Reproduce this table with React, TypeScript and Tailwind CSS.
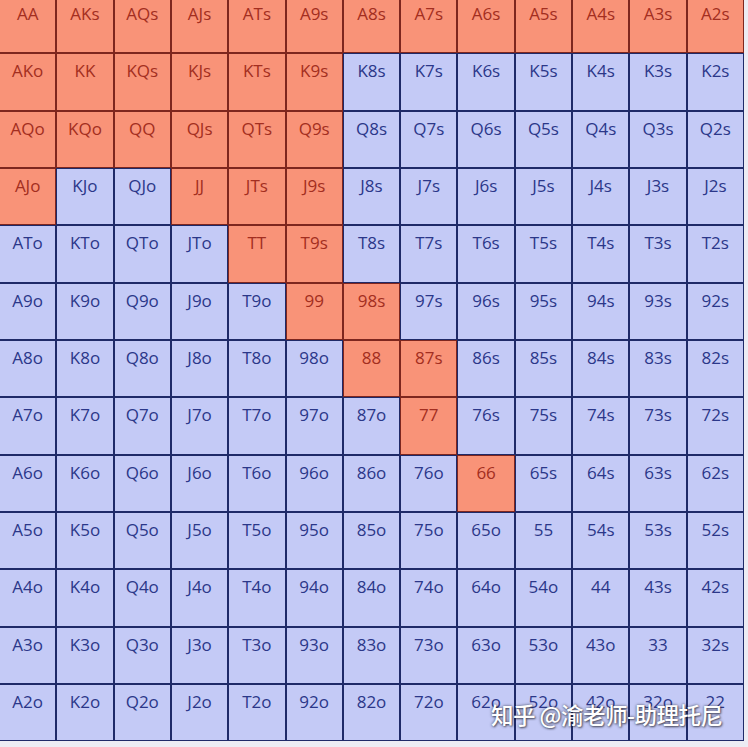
const ranks = ['A', 'K', 'Q', 'J', 'T', '9', '8', '7', '6', '5', '4', '3', '2'];

// cells played in the opening range (row, col)
const raised = new Set<string>([
  ...ranks.map((_, c) => `0-${c}`),
  '1-0', '1-1', '1-2', '1-3', '1-4', '1-5',
  '2-0', '2-1', '2-2', '2-3', '2-4', '2-5',
  '3-0', '3-3', '3-4', '3-5',
  '4-4', '4-5',
  '5-5', '5-6',
  '6-6', '6-7',
  '7-7',
  '8-8',
]);

function handLabel(r: number, c: number) {
  if (r === c) return ranks[r] + ranks[c];
  if (c > r) return ranks[r] + ranks[c] + 's';
  return ranks[c] + ranks[r] + 'o';
}

function Cell({ r, c }: { r: number; c: number }) {
  const hot = raised.has(`${r}-${c}`);
  return (
    <div
      className={
        hot
          ? 'h-[57.33px] border border-[#7e261e] bg-[#f99378] pt-[5px] text-center text-[17px] leading-[23px] text-[#a32e20]'
          : 'h-[57.33px] border border-[#1f2a68] bg-[#c4caf6] pt-[5px] text-center text-[17px] leading-[23px] text-[#2b3789]'
      }
    >
      {handLabel(r, c)}
    </div>
  );
}

export default function App() {
  return (
    <div className="relative h-[747px] w-[748px] overflow-hidden bg-[#ececf3] font-['Open_Sans','Noto_Sans',sans-serif]">
      <div className="-mt-[4px] -ml-[1px] grid w-[745px] grid-cols-13">
        {ranks.map((_, r) =>
          ranks.map((_, c) => <Cell key={`${r}-${c}`} r={r} c={c} />)
        )}
      </div>
      <div className="absolute top-[699px] left-[491px] whitespace-nowrap font-['Noto_Sans_CJK_SC',sans-serif] text-[22.5px] leading-[30px] font-medium tracking-[-0.5px] text-white [text-shadow:0_0_3px_rgba(40,40,60,0.8),1px_1px_2px_rgba(0,0,0,0.5)]">
        知乎 @渝老师-助理托尼
      </div>
    </div>
  );
}
